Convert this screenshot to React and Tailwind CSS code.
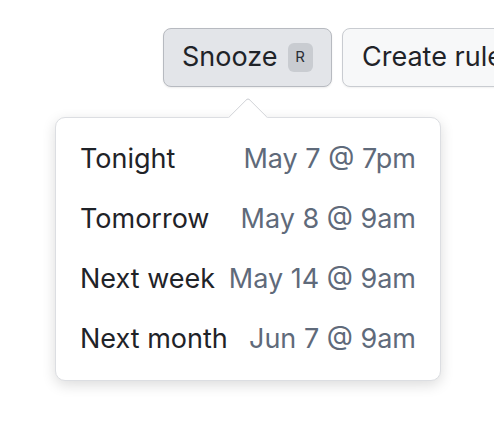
import React from 'react';

const options = [
  { label: 'Tonight', when: 'May 7 @ 7pm' },
  { label: 'Tomorrow', when: 'May 8 @ 9am' },
  { label: 'Next week', when: 'May 14 @ 9am' },
  { label: 'Next month', when: 'Jun 7 @ 9am' },
];

export default function App() {
  return (
    <div
      className="w-[494px] h-[436px] bg-white overflow-hidden"
      style={{ fontFamily: 'Inter, "Noto Sans", sans-serif' }}
    >
      {/* toolbar */}
      <div className="flex gap-[10px] pl-[163px] pt-[28px] whitespace-nowrap">
        <button className="shrink-0 flex items-center h-[59px] w-[169px] pl-[18px] rounded-[8px] bg-[#e3e5e9] border border-[#b7bac0] text-[27px] text-[#1f2328] shadow-[0_1px_2px_rgba(0,0,0,0.08)]">
          Snooze
          <span className="ml-[10px] flex items-center justify-center w-[25px] h-[29px] rounded-[6px] bg-[#c9ccd1] text-[15px] text-[#2b2f36]">
            R
          </span>
        </button>
        <button className="shrink-0 flex items-center h-[59px] pl-[19px] pr-[20px] rounded-[8px] bg-[#f7f8f9] border border-[#c9ccd1] text-[27px] text-[#1f2328] shadow-[0_1px_2px_rgba(0,0,0,0.06)]">
          Create rule
        </button>
      </div>

      {/* popover */}
      <div className="relative ml-[55px] mt-[30px] w-[386px] rounded-[10px] bg-white border border-[#dcdee2] shadow-[0_4px_14px_rgba(0,0,0,0.14)] py-[11px] px-[24px]">
        {options.map((o) => (
          <div key={o.label} className="flex items-center justify-between h-[60px] text-[27px] whitespace-nowrap">
            <span className="text-[#1f2328]">{o.label}</span>
            <span className="text-[#5f6a7a]">{o.when}</span>
          </div>
        ))}
        {/* arrow */}
        <span className="absolute left-[178px] top-[-15px] w-[28px] h-[28px] rotate-45 bg-white border-l border-t border-[#d4d6da] rounded-tl-[4px]" />
      </div>
    </div>
  );
}
